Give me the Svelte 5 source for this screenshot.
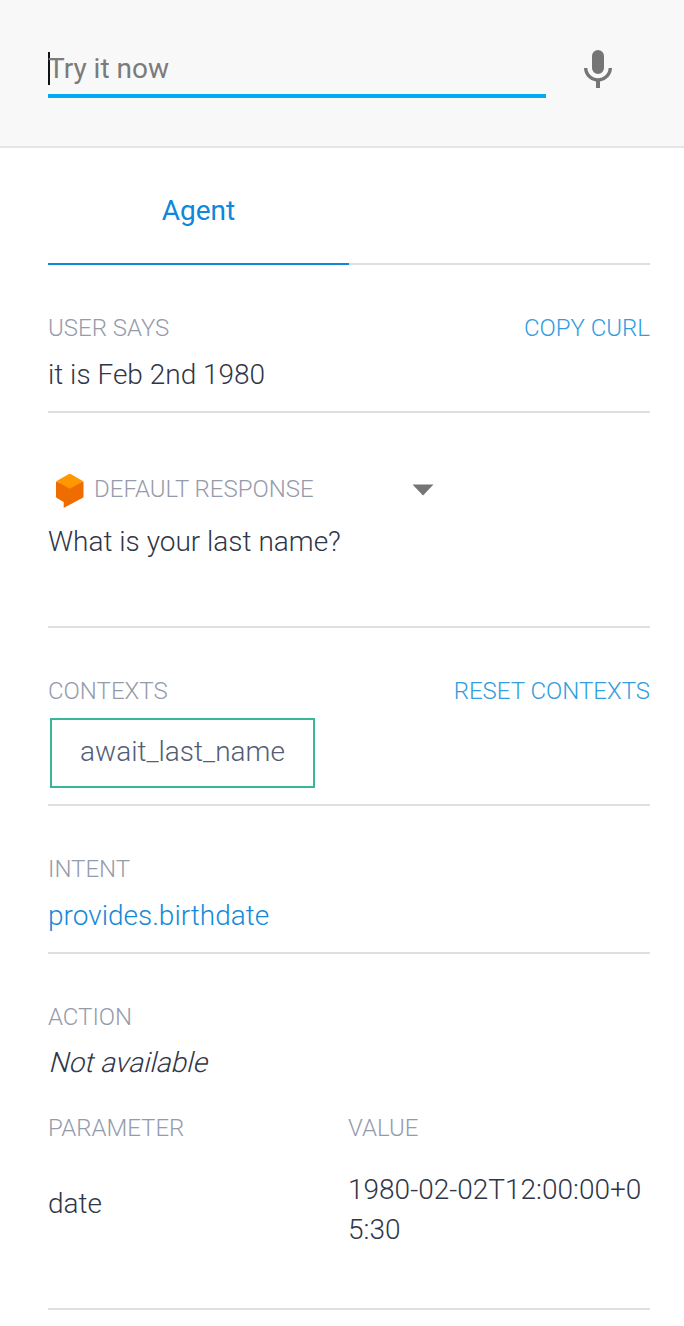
<script lang="ts">
  interface Parameter {
    name: string;
    value: string;
  }

  let query = $state('');

  const contexts = ['await_last_name'];
  const parameters: Parameter[] = [{ name: 'date', value: '1980-02-02T12:00:00+05:30' }];
</script>

<div class="console">
  <header class="query-bar">
    <div class="query-field">
      <span class="caret"></span>
      <input type="text" placeholder="Try it now" bind:value={query} />
    </div>
    <button class="mic" type="button" aria-label="Speak">
      <svg width="28" height="38" viewBox="0 0 28 38">
        <path
          fill="#757575"
          d="M14 24a6 6 0 0 0 6-6V6A6 6 0 0 0 8 6v12a6 6 0 0 0 6 6zm10.600-6c0 6-5.100 10.200-10.600 10.200S3.400 24 3.400 18H0c0 6.820 5.440 12.460 12 13.440V38h4v-6.560c6.560-.96 12-6.600 12-13.440z"
        />
      </svg>
    </button>
  </header>

  <main>
    <nav class="tabs">
      <button class="tab active" type="button">Agent</button>
    </nav>

    <section class="says">
      <div class="row">
        <h2>USER SAYS</h2>
        <button class="link" type="button">COPY CURL</button>
      </div>
      <p>it is Feb 2nd 1980</p>
    </section>

    <section class="response">
      <div class="source">
        <svg class="logo" width="29" height="35" viewBox="0 0 29 35">
          <path fill="#ef6c00" d="M1 8.500 14.800 13 28.500 8.500V23.500Q28.500 24.300 27.800 24.700L9.500 34.600Q8.700 35 8.700 34.200V29L1.800 25Q1 24.500 1 23.600z" />
          <path fill="#ff9800" d="M1.300 8.200 13.900 1.100Q14.800.7 15.700 1.100L28.200 8.200 14.800 15.800z" />
        </svg>
        <h2>DEFAULT RESPONSE</h2>
        <svg class="arrow" width="22" height="12" viewBox="0 0 22 12">
          <path fill="#757575" d="M.5 .5h21l-10.500 11z" />
        </svg>
      </div>
      <p>What is your last name?</p>
    </section>

    <section class="contexts">
      <div class="row">
        <h2>CONTEXTS</h2>
        <button class="link" type="button">RESET CONTEXTS</button>
      </div>
      {#each contexts as context}
        <span class="chip">{context}</span>
      {/each}
    </section>

    <section class="intent">
      <h2>INTENT</h2>
      <p class="intent-name">provides.birthdate</p>
    </section>

    <section class="action">
      <h2>ACTION</h2>
      <p class="empty">Not available</p>
      <div class="params head">
        <h2>PARAMETER</h2>
        <h2>VALUE</h2>
      </div>
      {#each parameters as param}
        <div class="params">
          <span class="name">{param.name}</span>
          <span class="value">{param.value}</span>
        </div>
      {/each}
    </section>
  </main>
</div>

<style>
  :global(body) {
    background: #fff;
  }
  .console {
    width: 684px;
    height: 1326px;
    overflow: hidden;
    font-family: Roboto, "Liberation Sans", sans-serif;
    font-size: 28px;
    font-weight: 300;
    line-height: 40px;
    color: #303648;
  }
  .query-bar {
    box-sizing: border-box;
    height: 148px;
    padding: 50px 72px 0 48px;
    display: flex;
    justify-content: space-between;
    background: #f8f8f8;
    border-bottom: 2px solid #e5e5e5;
  }
  .query-field {
    box-sizing: border-box;
    width: 498px;
    height: 48px;
    display: flex;
    border-bottom: 4px solid #03a9f4;
  }
  .caret {
    width: 2px;
    height: 33px;
    margin: 2px -2px 0 0;
    background: #111;
  }
  input {
    flex: 1;
    height: 38px;
    padding: 0;
    border: 0;
    outline: 0;
    background: transparent;
    font: inherit;
    font-weight: 400;
    color: #212121;
  }
  input::placeholder {
    color: #7b7b7b;
    opacity: 1;
  }
  button {
    padding: 0;
    border: 0;
    background: transparent;
    font: inherit;
    cursor: pointer;
  }
  .mic {
    width: 28px;
    height: 38px;
  }
  svg {
    display: block;
  }
  main {
    padding: 0 34px 0 48px;
  }
  .tabs {
    box-sizing: border-box;
    height: 117px;
    display: flex;
    border-bottom: 2px solid #e0e0e0;
  }
  .tab {
    width: 301px;
    height: 117px;
    box-sizing: border-box;
    padding-top: 10px;
    border-bottom: 2px solid #0f87da;
    color: #0f87da;
    font-weight: 400;
  }
  section {
    box-sizing: border-box;
    border-bottom: 2px solid #e0e0e0;
  }
  h2 {
    margin: 0;
    font-size: 24px;
    font-weight: 300;
    line-height: 32px;
    color: #959bab;
  }
  p {
    margin: 0;
  }
  .row {
    display: flex;
    justify-content: space-between;
  }
  .link {
    font-size: 24px;
    line-height: 32px;
    color: #319ce0;
  }
  .says {
    height: 148px;
    padding-top: 47px;
  }
  .says p {
    margin-top: 11px;
  }
  .response {
    height: 215px;
    padding-top: 60px;
  }
  .source {
    width: 379px;
    height: 35px;
    padding-left: 7px;
    display: flex;
  }
  .source h2 {
    margin-left: 10px;
  }
  .arrow {
    margin: 11px 0 0 auto;
  }
  .response p {
    margin-top: 14px;
  }
  .contexts {
    height: 178px;
    padding-top: 47px;
  }
  .chip {
    box-sizing: border-box;
    display: inline-block;
    height: 70px;
    margin: 11px 2px 0;
    padding: 12px 28px;
    border: 2px solid #36b896;
    color: #535d74;
  }
  .intent {
    height: 148px;
    padding-top: 47px;
  }
  .intent-name {
    margin-top: 11px;
    color: #1489d9;
  }
  .action {
    height: 356px;
    padding-top: 47px;
  }
  /* Slanted upright face rather than the true italic */
  .empty {
    width: max-content;
    margin-top: 10px;
    transform: skewX(-14deg);
    transform-origin: 0 30px;
  }
  .params {
    display: grid;
    grid-template-columns: 300px 302px;
    align-items: center;
  }
  .head {
    margin: 29px 0 26px;
  }
  .name {
    padding-bottom: 12px;
  }
  .value {
    word-break: break-all;
  }
</style>
